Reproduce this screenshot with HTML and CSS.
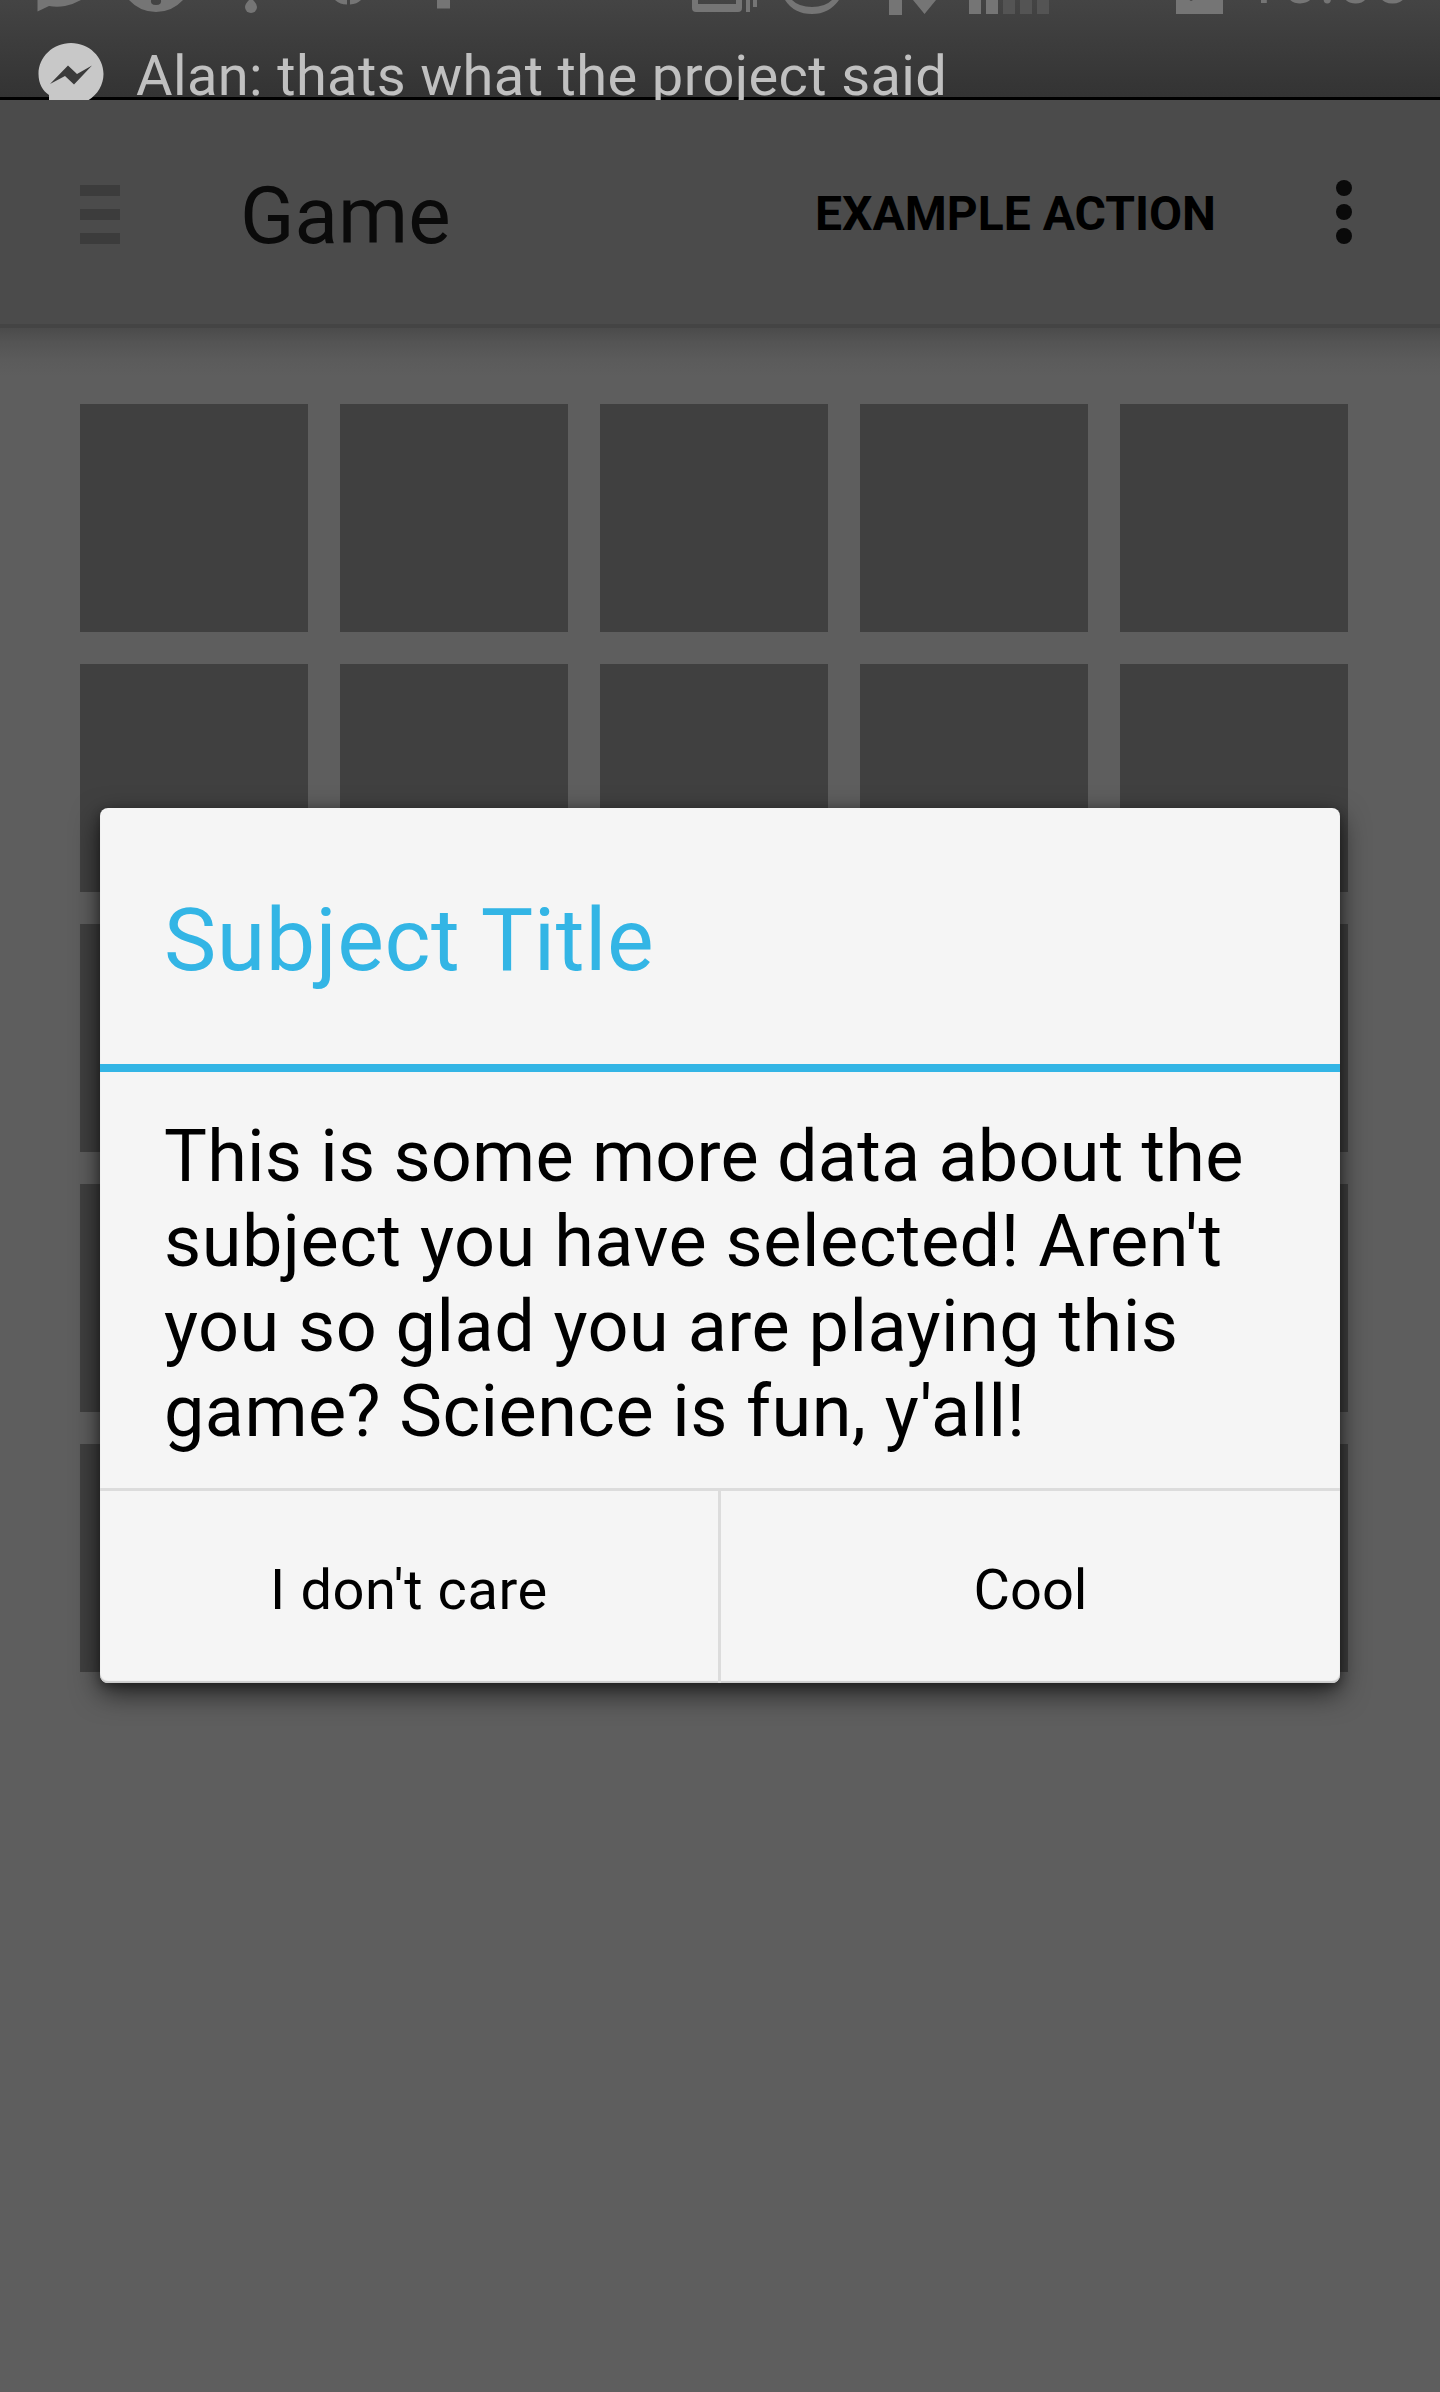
FILE: index.html
```html
<!DOCTYPE html>
<html lang="en">
<head>
<meta charset="utf-8">
<title>Game</title>
<link rel="stylesheet" href="styles.css">
</head>
<body>
<div class="screen">
  <header class="status">
    <div class="tray">
      <svg class="tray-icons" width="1240" height="43" viewBox="0 0 1240 43" fill="#757575">
        <path d="M37.500 0V11.500L49 6Q57 7.500 65 6Q74 4 81 0Z"/>
        <path d="M129 0Q140 12 156 12Q172 12 183 0H161Q162 5 156 5Q150 5 151 0Z"/>
        <path d="M249 0H253Q257 4 257 7A6 6 0 0 1 245 7Q245 4 249 0Z"/>
        <path d="M335 0Q340 4.500 347 4.500V0ZM350 0V4.500Q357 4 361 0Z"/>
        <rect x="437" width="13" height="8.500"/>
        <path d="M692 0H698V4H736V0H742V8Q742 12 738 12H696Q692 12 692 8ZM746 0H750V12H746ZM753 0H757V7H753Z"/>
        <path d="M785 0Q794 14 812 14Q829 14 839 0H832Q825 7 812 7Q799 7 792 0Z"/>
        <path d="M889 0H902V15H889ZM913 0H936L924.500 14Z"/>
        <path d="M969 0H981V14H969ZM986 0H998V14H986Z"/>
        <path fill="#545454" d="M1003 0H1015V14H1003ZM1020 0H1032V14H1020ZM1037 0H1049V14H1037Z"/>
        <path d="M1176 0H1189.500L1191 1L1193 0H1223V14H1176Z"/>
      </svg>
      <span class="clock">15<span class="colon">:</span>08</span>
    </div>
    <div class="ticker">
      <svg class="messenger" width="66" height="66" viewBox="0 0 66 66">
        <path fill="#c8c8c8" d="M33 0C15 0 .500 14 .500 31C.500 41 5 48 11 52V64L22 60L33 62C51 62 65.500 48 65.500 31C65.500 14 51 0 33 0Z"/>
        <path fill="#3a3a3a" d="M12 41L30 22.500L39 31L54 22.500L36 41.500L27 33Z"/>
      </svg>
      <span class="ticker-text">Alan: thats what the project said</span>
    </div>
  </header>
  <nav class="toolbar">
    <div class="menu"><i></i><i></i><i></i></div>
    <h1 class="app-title">Game</h1>
    <span class="action">EXAMPLE ACTION</span>
    <div class="overflow"><i></i><i></i><i></i></div>
  </nav>
  <main class="board">
    <i></i><i></i><i></i><i></i><i></i>
    <i></i><i></i><i></i><i></i><i></i>
    <i></i><i></i><i></i><i></i><i></i>
    <i></i><i></i><i></i><i></i><i></i>
    <i></i><i></i><i></i><i></i><i></i>
  </main>
  <section class="dialog" role="dialog">
    <h2 class="dialog-title">Subject Title</h2>
    <p class="dialog-text"><span class="line-a">This is some more data about the</span><br><span class="line-b">subject you have selected! Aren't</span><br><span class="line-c">you so glad you are playing this</span><br><span class="line-d">game? Science is fun, y'all!</span></p>
    <div class="buttons">
      <button class="dismiss">I don't care</button>
      <button>Cool</button>
    </div>
  </section>
</div>
</body>
</html>
```

FILE: styles.css
```css
* { box-sizing: border-box; }
body { margin: 0; background: #5e5e5e; font-family: Roboto, sans-serif; }
h1, h2, p { margin: 0; font-weight: 400; }
.screen { position: relative; width: 1440px; height: 2392px; overflow: hidden; background: #5e5e5e; }

.status { height: 100px; overflow: hidden; background: linear-gradient(#444, #333 97px, #000 97px); }
.tray { display: flex; height: 43px; }
.clock { height: 43px; margin: -56px 0 0 4px; font-size: 64px; line-height: 75px; letter-spacing: 1px; color: #757575; }
.colon { margin: 0 1.5px; }
.ticker { display: flex; align-items: center; height: 66px; padding-left: 38px; }
.messenger { flex: none; }
.ticker-text { margin-left: 32px; font-size: 56px; line-height: 66px; letter-spacing: .37px; white-space: nowrap; color: #c0c0c0; }

.toolbar { display: flex; align-items: center; height: 228px; padding: 0 88px 4px 80px; background: #4b4b4b; border-bottom: 4px solid #444; }
.menu { display: grid; gap: 13px; width: 40px; margin-top: 9px; }
.menu i { height: 11px; background: #3c3c3c; }
.app-title { margin: 11px 0 0 120px; font-size: 80px; line-height: 94px; color: #0a0a0a; }
.action { margin: 7px 0 0 auto; font-size: 48px; font-weight: 700; line-height: 56px; white-space: nowrap; color: #000; }
.overflow { display: grid; gap: 8px; width: 16px; margin: 4px 0 0 120px; }
.overflow i { height: 16px; border-radius: 50%; background: #0a0a0a; }

.board { display: grid; grid-template-columns: repeat(5, 228px); grid-auto-rows: 228px; gap: 32px; padding: 76px 80px; background: linear-gradient(#4b4b4b, #545454 14px, #5b5b5b 32px, #5e5e5e 48px); }
.board i { background: #404040; }

.dialog { position: absolute; left: 100px; top: 808px; width: 1240px; height: 875px; border-radius: 8px; background: #f5f5f5; box-shadow: inset 0 -2px 1px #ccc, 0 10px 28px rgba(0, 0, 0, .65), 0 3px 10px rgba(0, 0, 0, .3); }
.dialog-title { height: 264px; padding: 8px 64px 0; border-bottom: 8px solid #33b5e5; font-size: 88px; line-height: 248px; letter-spacing: .5px; color: #33b5e5; }
.dialog-text { height: 416px; padding: 42px 0 0 64px; font-size: 72px; line-height: 85px; white-space: nowrap; color: #000; }
.line-a { letter-spacing: .22px; }
.line-b { letter-spacing: .52px; }
.line-c { letter-spacing: .48px; }
.line-d { letter-spacing: .42px; }
.buttons { display: grid; grid-template-columns: 621px 619px; height: 195px; border-top: 3px solid #dcdcdc; }
.buttons button { padding: 6px 0 0; border: 0; background: none; font: 400 56px Roboto, sans-serif; color: #000; }
.buttons .dismiss { border-right: 3px solid #dcdcdc; letter-spacing: .6px; }
```
